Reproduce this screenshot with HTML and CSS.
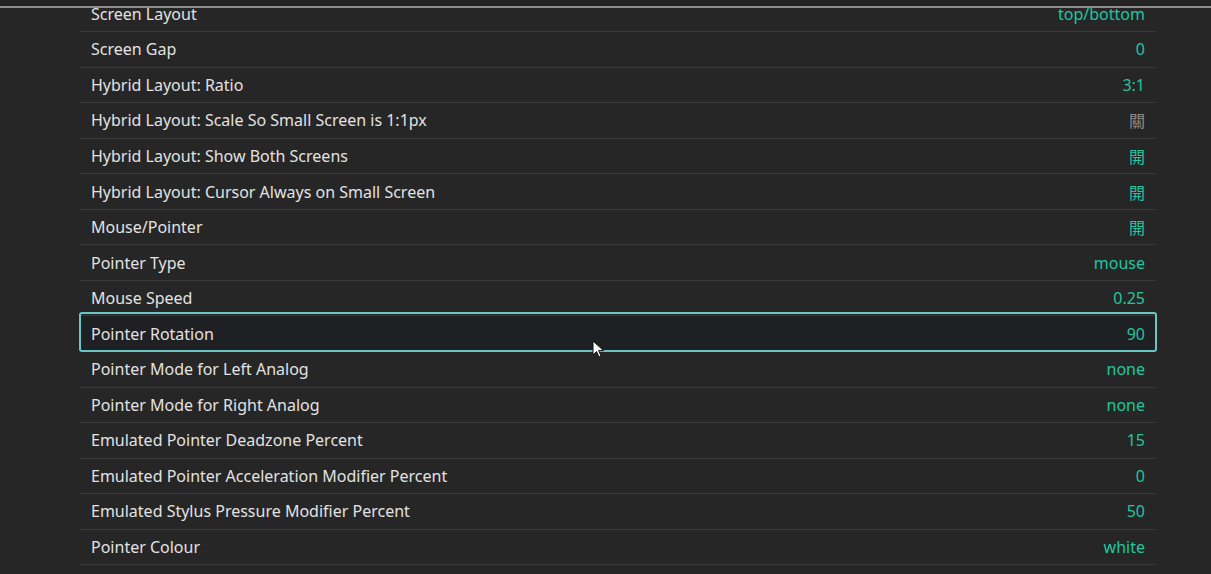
FILE: index.html
```html
<!DOCTYPE html>
<html>
<head>
<meta charset="utf-8">
<link rel="stylesheet" href="styles.css">
</head>
<body>
<div class="topbar"></div>
<div class="scroller">
  <ul class="list">
    <li class="row"><span class="label">Screen Layout</span><span class="value">top/bottom</span></li>
    <li class="row"><span class="label">Screen Gap</span><span class="value">0</span></li>
    <li class="row"><span class="label">Hybrid Layout: Ratio</span><span class="value">3:1</span></li>
    <li class="row"><span class="label">Hybrid Layout: Scale So Small Screen is 1:1px</span><span class="value off">關</span></li>
    <li class="row"><span class="label">Hybrid Layout: Show Both Screens</span><span class="value">開</span></li>
    <li class="row"><span class="label">Hybrid Layout: Cursor Always on Small Screen</span><span class="value">開</span></li>
    <li class="row"><span class="label">Mouse/Pointer</span><span class="value">開</span></li>
    <li class="row"><span class="label">Pointer Type</span><span class="value">mouse</span></li>
    <li class="row"><span class="label">Mouse Speed</span><span class="value">0.25</span></li>
    <li class="row focused"><span class="label">Pointer Rotation</span><span class="value">90</span>
      <svg class="cursor" width="14" height="20" viewBox="0 0 14 20"><path d="M1 1 L1 15 L4.5 11.5 L7 17 L9 16 L6.6 10.6 L11.5 10.6 Z" fill="#fff" stroke="#111" stroke-width="1"/></svg>
    </li>
    <li class="row"><span class="label">Pointer Mode for Left Analog</span><span class="value">none</span></li>
    <li class="row"><span class="label">Pointer Mode for Right Analog</span><span class="value">none</span></li>
    <li class="row"><span class="label">Emulated Pointer Deadzone Percent</span><span class="value">15</span></li>
    <li class="row"><span class="label">Emulated Pointer Acceleration Modifier Percent</span><span class="value">0</span></li>
    <li class="row"><span class="label">Emulated Stylus Pressure Modifier Percent</span><span class="value">50</span></li>
    <li class="row"><span class="label">Pointer Colour</span><span class="value">white</span></li>
  </ul>
</div>
</body>
</html>
```
FILE: styles.css
```css
html, body {
  margin: 0;
  padding: 0;
  height: 100%;
  background: #262626;
  overflow: hidden;
}
body {
  font-family: "Noto Sans", "Noto Sans CJK TC", sans-serif;
  font-size: 16px;
  color: #e2e2e2;
}
.topbar {
  height: 6px;
  border-bottom: 2px solid #8e8e8e;
  background: #242424;
}
.scroller {
  height: 566px;
  overflow: hidden;
}
.list {
  list-style: none;
  margin: -11.5px 0 0 80px;
  padding: 0;
  width: 1076px;
}
.row {
  box-sizing: border-box;
  height: 35.55px;
  border-bottom: 1px solid #3a3a3a;
  display: flex;
  align-items: center;
  justify-content: space-between;
  padding: 0 11px;
  position: relative;
}
.value {
  color: #1fc6a0;
  font-family: "Noto Sans", "Noto Sans CJK TC", sans-serif;
}
.value.off {
  color: #8c8c8c;
}
.focused {
  background: #1f2024;
}
.focused::before {
  content: "";
  position: absolute;
  left: -1px;
  right: -1px;
  top: -4px;
  bottom: -1px;
  border: 2px solid #6ac5c5;
  border-radius: 3px;
  pointer-events: none;
}
.cursor {
  position: absolute;
  left: 512px;
  top: 24px;
}
```
